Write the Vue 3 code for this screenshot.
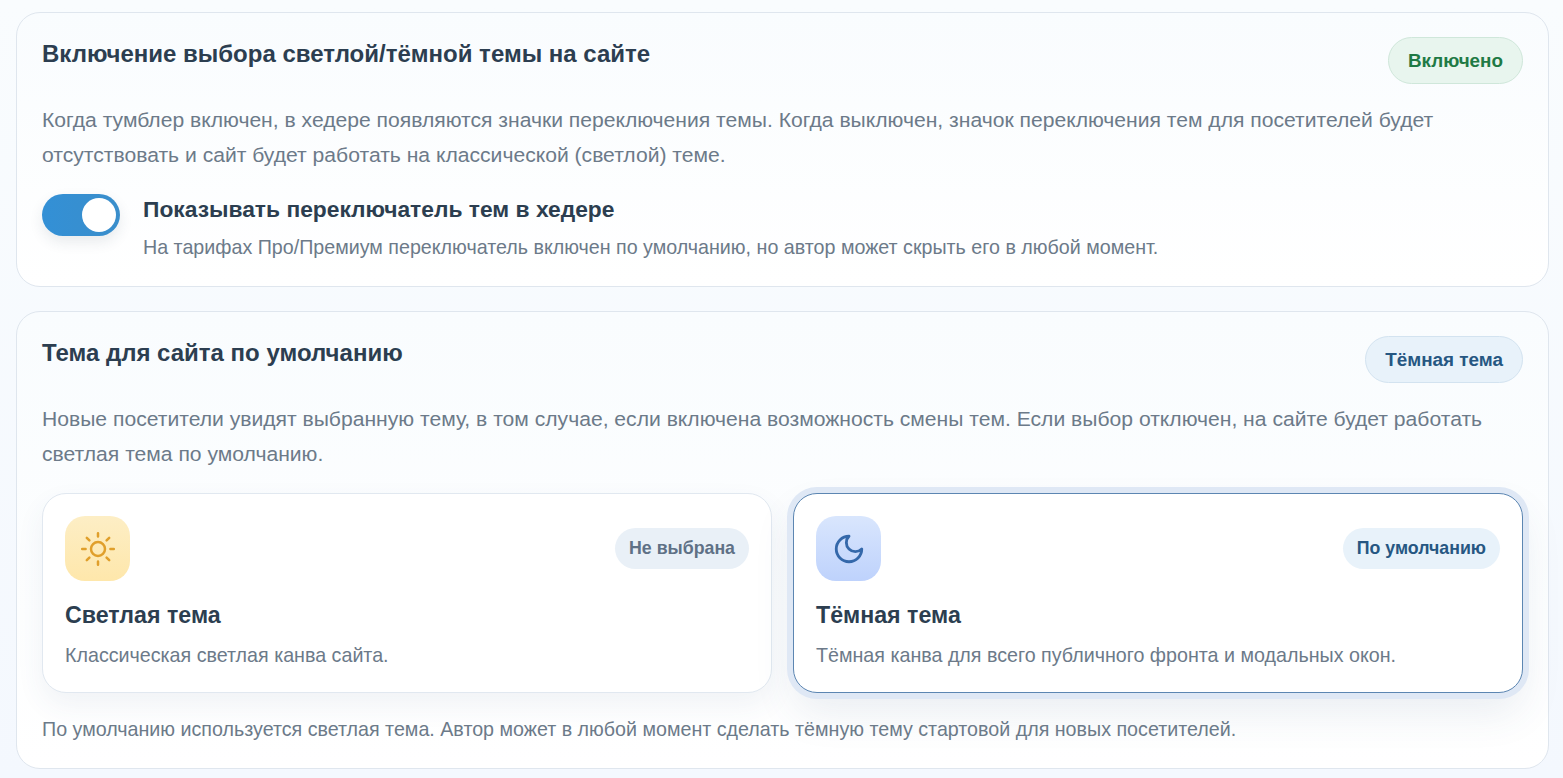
<script setup>
const themes = [
  { key: 'light', title: 'Светлая тема', text: 'Классическая светлая канва сайта.', badge: 'Не выбрана' },
  { key: 'dark', title: 'Тёмная тема', text: 'Тёмная канва для всего публичного фронта и модальных окон.', badge: 'По умолчанию' }
]
</script>

<template>
  <main class="page">
    <section class="card first">
      <header class="head">
        <h2>Включение выбора светлой/тёмной темы на сайте</h2>
        <span class="pill green">Включено</span>
      </header>
      <p class="desc">Когда тумблер включен, в хедере появляются значки переключения темы. Когда выключен, значок переключения тем для посетителей будет отсутствовать и сайт будет работать на классической (светлой) теме.</p>
      <div class="toggle-row">
        <span class="toggle"><span class="knob"></span></span>
        <div>
          <div class="toggle-title">Показывать переключатель тем в хедере</div>
          <div class="toggle-note">На тарифах Про/Премиум переключатель включен по умолчанию, но автор может скрыть его в любой момент.</div>
        </div>
      </div>
    </section>

    <section class="card second">
      <header class="head">
        <h2>Тема для сайта по умолчанию</h2>
        <span class="pill blue">Тёмная тема</span>
      </header>
      <p class="desc">Новые посетители увидят выбранную тему, в том случае, если включена возможность смены тем. Если выбор отключен, на сайте будет работать светлая тема по умолчанию.</p>
      <div class="themes">
        <article v-for="t in themes" :key="t.key" class="theme" :class="t.key">
          <div class="theme-top">
            <span class="icon">
              <svg v-if="t.key === 'light'" width="36" height="36" viewBox="0 0 36 36" fill="none" stroke="#e09f2b" stroke-width="2.5" stroke-linecap="round">
                <circle cx="18" cy="18" r="7" />
                <path d="M18 2.2v3.4M18 30.4v3.4M2.2 18h3.4M30.4 18h3.4M6.8 6.8l2.6 2.6M26.6 26.6l2.6 2.6M6.8 29.2l2.6-2.6M26.6 9.4l2.6-2.6" />
              </svg>
              <svg v-else width="34" height="34" viewBox="0 0 24 24" fill="none" stroke="#3468aa" stroke-width="2" stroke-linecap="round" stroke-linejoin="round">
                <path d="M12 3a6 6 0 0 0 9 9 9 9 0 1 1-9-9Z" />
              </svg>
            </span>
            <span class="tag">{{ t.badge }}</span>
          </div>
          <h3>{{ t.title }}</h3>
          <p>{{ t.text }}</p>
        </article>
      </div>
      <p class="foot">По умолчанию используется светлая тема. Автор может в любой момент сделать тёмную тему стартовой для новых посетителей.</p>
    </section>
  </main>
</template>

<style scoped>
.page {
  box-sizing: border-box;
  height: 778px;
  padding: 12px 14px 0 16px;
  display: flex;
  flex-direction: column;
  gap: 24px;
  overflow: hidden;
  font-family: "Liberation Sans", Arial, sans-serif;
  background: linear-gradient(180deg, #f9fcfe 0%, #f4f8fe 100%);
}
.card {
  box-sizing: border-box;
  border: 1px solid #dfe6ee;
  border-radius: 24px;
  padding: 24px 25px 0;
  background: linear-gradient(180deg, #f9fcfe 0%, #ffffff 100%);
}
.first { height: 275px; }
.second { height: 458px; }
.head {
  display: flex;
  justify-content: space-between;
  align-items: flex-start;
}
h2 {
  margin: 0;
  font-size: 24px;
  line-height: 34px;
  font-weight: 700;
  color: #2c3e50;
}
.pill {
  box-sizing: border-box;
  height: 47px;
  border-radius: 24px;
  padding: 0 19px;
  display: flex;
  align-items: center;
  font-size: 18.88px;
  font-weight: 700;
}
.green { color: #1f7a45; background: #e8f5ee; border: 1px solid #cfe7da; }
.blue { color: #265782; background: #e8f2fa; border: 1px solid #d3e3f0; }
.desc {
  margin: 18px 0 0;
  font-size: 21.12px;
  line-height: 35px;
  color: #6c7a89;
}
.toggle-row {
  display: flex;
  gap: 23px;
  margin-top: 21px;
}
.toggle {
  flex: none;
  position: relative;
  width: 78px;
  height: 42px;
  margin-top: 1px;
  border-radius: 21px;
  background: linear-gradient(90deg, #3390d6, #3a8ecb);
  box-shadow: 0 6px 14px rgba(44, 62, 80, .1);
}
.knob {
  position: absolute;
  top: 4px;
  right: 4px;
  width: 34px;
  height: 34px;
  border-radius: 50%;
  background: #fff;
}
.toggle-title {
  font-size: 22.8px;
  line-height: 32px;
  font-weight: 700;
  color: #2c3e50;
}
.toggle-note {
  margin-top: 8px;
  font-size: 19.68px;
  line-height: 28px;
  color: #6c7a89;
}
.themes {
  display: grid;
  grid-template-columns: 730px 730px;
  gap: 21px;
  margin-top: 22px;
}
.theme {
  box-sizing: border-box;
  height: 200px;
  border-radius: 24px;
  padding: 22px 22px 0;
  background: #fff;
  border: 1px solid #e1e8f0;
  box-shadow: 0 12px 28px rgba(60, 90, 130, .07);
}
.theme.dark {
  border-color: #5c86b2;
  box-shadow: 0 0 0 6px #dfe8f5, 0 20px 40px rgba(60, 90, 130, .1);
}
.theme-top {
  display: flex;
  justify-content: space-between;
  align-items: center;
}
.icon {
  width: 65px;
  height: 65px;
  border-radius: 20px;
  display: flex;
  align-items: center;
  justify-content: center;
}
.light .icon { background: linear-gradient(180deg, #fdeec5, #fee7ab); }
.dark .icon { background: linear-gradient(180deg, #d9e6fd, #bed2fc); }
.tag {
  height: 41px;
  border-radius: 21px;
  padding: 0 14px;
  display: flex;
  align-items: center;
  font-size: 17.76px;
  font-weight: 700;
}
.light .tag { background: #e9f0f7; color: #5f7186; }
.dark .tag { background: #e8f2fa; color: #265782; }
h3 {
  margin: 18px 0 0;
  font-size: 23.2px;
  line-height: 32px;
  font-weight: 700;
  color: #2c3e50;
}
.theme p {
  margin: 10px 0 0;
  font-size: 19.68px;
  line-height: 28px;
  color: #6c7a89;
}
.foot {
  margin: 22px 0 0;
  font-size: 19.68px;
  line-height: 28px;
  color: #6c7a89;
}
</style>
<style>
html, body { margin: 0; background: #f6fafe; }
</style>
